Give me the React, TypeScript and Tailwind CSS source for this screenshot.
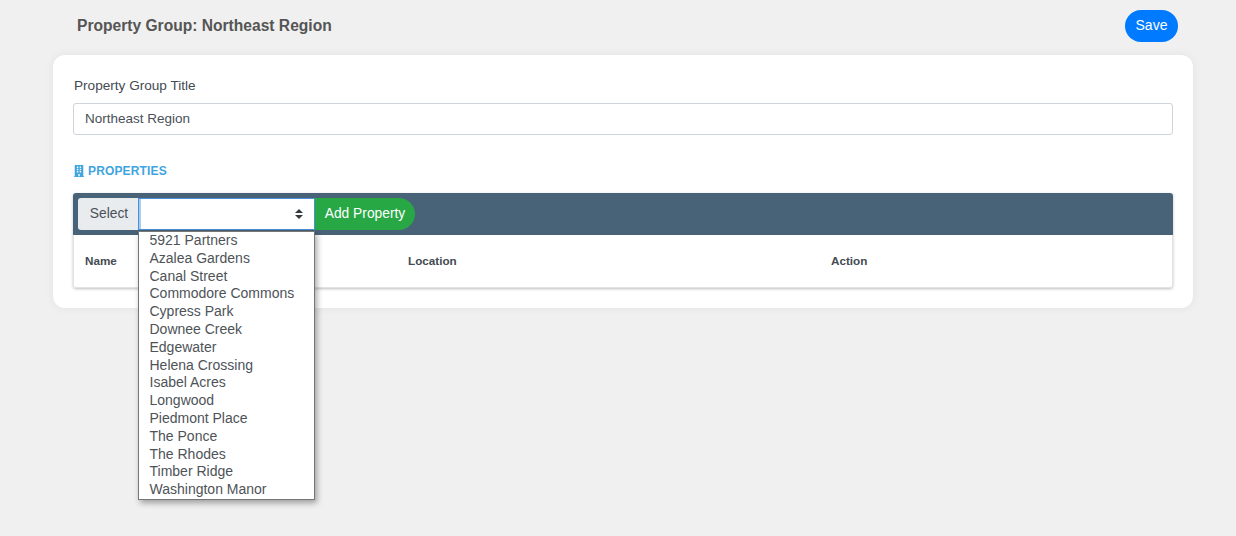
import React from "react"
import { FaBuilding } from "react-icons/fa"

const properties = [
  "5921 Partners",
  "Azalea Gardens",
  "Canal Street",
  "Commodore Commons",
  "Cypress Park",
  "Downee Creek",
  "Edgewater",
  "Helena Crossing",
  "Isabel Acres",
  "Longwood",
  "Piedmont Place",
  "The Ponce",
  "The Rhodes",
  "Timber Ridge",
  "Washington Manor",
]

export default function App() {
  return (
    <div className="h-[536px] w-[1236px] overflow-hidden bg-[#f0f0f0] font-['Liberation_Sans',Arial,sans-serif] text-[14px] text-[#495057]">
      {/* Header */}
      <div className="flex h-[55px] items-start justify-between pl-[77px] pr-[58px] pt-[10px]">
        <h1 className="text-[15.6px] font-bold leading-[31px] text-[#555555]">Property Group: Northeast Region</h1>
        <button className="h-[32px] w-[53px] rounded-2xl bg-[#007bff] pb-[2px] text-[14px] text-white">Save</button>
      </div>

      {/* Card */}
      <div className="mx-[53px] h-[253px] w-[1140px] rounded-xl bg-white px-5 pt-[20px] shadow-[0_0_10px_rgba(0,0,0,0.06)]">
        <label className="block pl-px text-[13.6px] leading-[21px] text-[#444b52]">Property Group Title</label>
        <div className="mt-[7px] flex h-[32px] w-[1100px] items-center rounded-[3px] border border-[#ced4da] px-[11px] text-[13.5px] text-[#495057]">
          Northeast Region
        </div>

        <div className="mt-[29px] flex h-[14px] items-center gap-[4px] text-[12px] font-bold tracking-[0.15px] text-[#3fa5e0]">
          <FaBuilding className="ml-px h-[12px] w-[10px]" preserveAspectRatio="none" />
          PROPERTIES
        </div>

        {/* Table panel */}
        <div className="mt-[15px] w-[1100px] rounded-[3px] shadow-[0_1px_3px_rgba(0,0,0,0.25)]">
          <div className="flex h-[42px] items-center rounded-t-[3px] bg-[#486278] pl-[5px]">
            <div className="flex h-[32px] w-[60px] items-center justify-center rounded-l-[3px] bg-[#e9ecef] pl-[2px] text-[13.8px] text-[#495057]">
              Select
            </div>
            <div className="relative h-[32px] w-[177px] border border-[#4a90d9] bg-white">
              <div className="absolute bottom-0 left-0 top-0 w-[2px] bg-[#a8ccf2]" />
              <svg className="absolute right-[11px] top-[10px]" width="8" height="10" viewBox="0 0 8 10">
                <path d="M4 0 L8 4 H0 Z M4 10 L8 6 H0 Z" fill="#343a40" />
              </svg>

              {/* Open native-style list */}
              <div className="absolute -left-px top-[32px] z-10 h-[269px] w-[177px] border border-[#767676] bg-white pl-[10.5px] shadow-[2px_3px_6px_rgba(0,0,0,0.35)]">
                {properties.map((name) => (
                  <div key={name} className="h-[17.8px] text-[14px] leading-[17.8px] text-[#4e5358]">
                    {name}
                  </div>
                ))}
              </div>
            </div>
            <button className="h-[32px] w-[100px] rounded-r-2xl bg-[#28a745] text-[13.8px] text-white">Add Property</button>
          </div>
          <div className="flex h-[53px] items-center rounded-b-[3px] border-x border-b border-[#e3e3e3] bg-white text-[11.7px] font-bold text-[#444b52]">
            <div className="w-[334px] pl-[11px]">Name</div>
            <div className="w-[423px]">Location</div>
            <div>Action</div>
          </div>
        </div>
      </div>
    </div>
  )
}
